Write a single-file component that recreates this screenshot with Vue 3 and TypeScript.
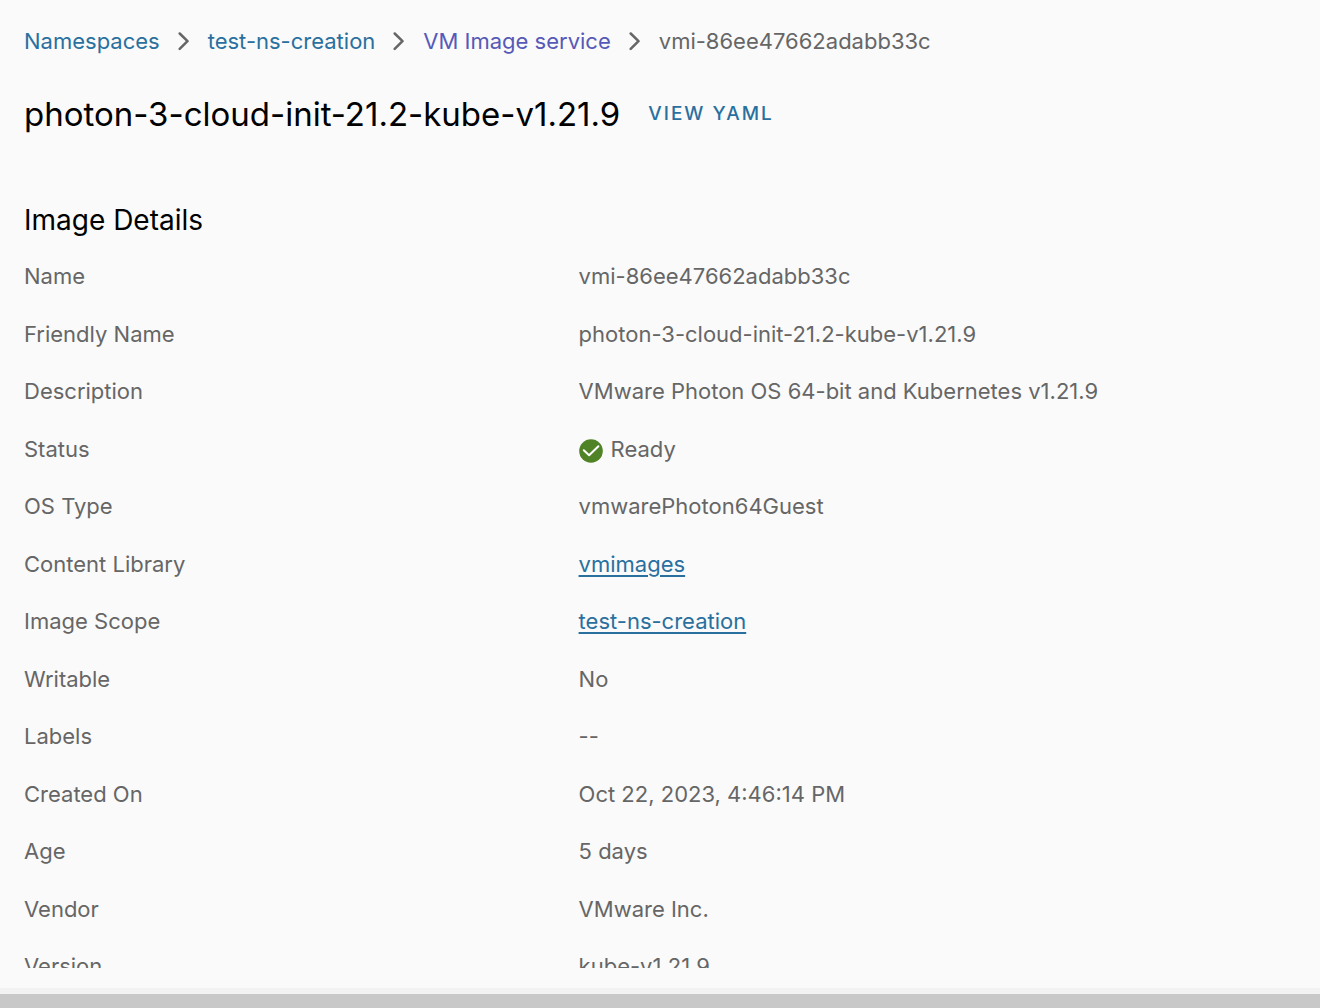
<script setup lang="ts">
interface Crumb {
  label: string
  kind: 'link' | 'visited' | 'current'
}

interface Detail {
  label: string
  value: string
  kind?: 'status' | 'link'
}

const crumbs: Crumb[] = [
  { label: 'Namespaces', kind: 'link' },
  { label: 'test-ns-creation', kind: 'link' },
  { label: 'VM Image service', kind: 'visited' },
  { label: 'vmi-86ee47662adabb33c', kind: 'current' },
]

const details: Detail[] = [
  { label: 'Name', value: 'vmi-86ee47662adabb33c' },
  { label: 'Friendly Name', value: 'photon-3-cloud-init-21.2-kube-v1.21.9' },
  { label: 'Description', value: 'VMware Photon OS 64-bit and Kubernetes v1.21.9' },
  { label: 'Status', value: 'Ready', kind: 'status' },
  { label: 'OS Type', value: 'vmwarePhoton64Guest' },
  { label: 'Content Library', value: 'vmimages', kind: 'link' },
  { label: 'Image Scope', value: 'test-ns-creation', kind: 'link' },
  { label: 'Writable', value: 'No' },
  { label: 'Labels', value: '--' },
  { label: 'Created On', value: 'Oct 22, 2023, 4:46:14 PM' },
  { label: 'Age', value: '5 days' },
  { label: 'Vendor', value: 'VMware Inc.' },
  { label: 'Version', value: 'kube-v1.21.9' },
]
</script>

<template>
  <div class="shell">
    <main class="content">
      <nav aria-label="Breadcrumb">
        <ol class="crumbs">
          <li v-for="(crumb, i) in crumbs" :key="crumb.label" class="crumb">
            <svg v-if="i > 0" class="chevron" viewBox="0 0 12 20" aria-hidden="true">
              <path d="M1.7 2.5 9.5 10.2 1.7 17.9" />
            </svg>
            <span v-if="crumb.kind === 'current'" aria-current="page">{{ crumb.label }}</span>
            <a v-else href="#" :class="crumb.kind">{{ crumb.label }}</a>
          </li>
        </ol>
      </nav>

      <header class="heading">
        <h1>photon-3-cloud-init-21.2-kube-v1.21.9</h1>
        <button type="button" class="yaml">VIEW YAML</button>
      </header>

      <section>
        <h2>Image Details</h2>
        <dl class="details">
          <div v-for="item in details" :key="item.label" class="row">
            <dt>{{ item.label }}</dt>
            <dd>
              <a v-if="item.kind === 'link'" href="#" class="link underlined">{{ item.value }}</a>
              <span v-else-if="item.kind === 'status'" class="status">
                <svg class="check" viewBox="0 0 24 24" aria-hidden="true">
                  <circle cx="12" cy="12" r="11.8" />
                  <path d="M4.8 11.3 10.1 16.3 19.4 7.2" />
                </svg>
                {{ item.value }}
              </span>
              <template v-else>{{ item.value }}</template>
            </dd>
          </div>
        </dl>
      </section>
    </main>
    <div class="edge"></div>
    <div class="splitter"></div>
  </div>
</template>

<style>
body {
  margin: 0;
  background: #fafafa;
}
</style>

<style scoped>
.shell {
  display: flex;
  flex-direction: column;
  height: 100vh;
  background: #fafafa;
  color: #666;
  font-family: Inter, "Liberation Sans", sans-serif;
  font-size: 22px;
  line-height: 28px;
}

.content {
  flex: 1;
  min-height: 0;
  overflow: hidden;
  padding: 27px 24px 0;
  margin-bottom: 20px;
}

.edge {
  height: 6px;
  background: #f2f2f2;
}

.splitter {
  height: 14px;
  background: #c8c8c8;
}

.crumbs {
  display: flex;
  margin: 0;
  padding: 0;
  list-style: none;
}

.crumb {
  display: flex;
  align-items: center;
  white-space: nowrap;
}

.chevron {
  width: 12px;
  height: 20px;
  margin: 0 18px;
  fill: none;
  stroke: #666;
  stroke-width: 2.5;
  stroke-linecap: round;
  stroke-linejoin: round;
}

a {
  text-decoration: none;
}

.link {
  color: #29709e;
}

.visited {
  color: #5659b8;
}

.underlined {
  text-decoration: underline;
  text-decoration-thickness: 2px;
  text-underline-offset: 3px;
}

.heading {
  display: flex;
  align-items: center;
  gap: 28px;
  margin-top: 37px;
}

h1,
h2 {
  margin: 0;
  color: #000;
  font-weight: 400;
  white-space: nowrap;
}

h1 {
  font-size: 33px;
  line-height: 44px;
}

.yaml {
  padding: 0;
  border: 0;
  background: none;
  color: #29709e;
  font: 500 19px/28px Inter, "Liberation Sans", sans-serif;
  letter-spacing: 2px;
  white-space: nowrap;
}

h2 {
  margin-top: 66px;
  font-size: 28px;
  line-height: 36px;
}

.details {
  margin: 24px 0 0;
}

.row {
  display: flex;
  height: 58px;
}

.row:nth-child(even) {
  height: 57px;
}

dt {
  flex: 0 0 43.6%;
}

dd {
  margin: 0;
}

.status {
  display: flex;
  align-items: center;
  gap: 8px;
}

.check {
  width: 24px;
  height: 24px;
  margin-top: 4px;
}

.check circle {
  fill: #508226;
}

.check path {
  fill: none;
  stroke: #fff;
  stroke-width: 2;
  stroke-linecap: round;
  stroke-linejoin: round;
}
</style>
